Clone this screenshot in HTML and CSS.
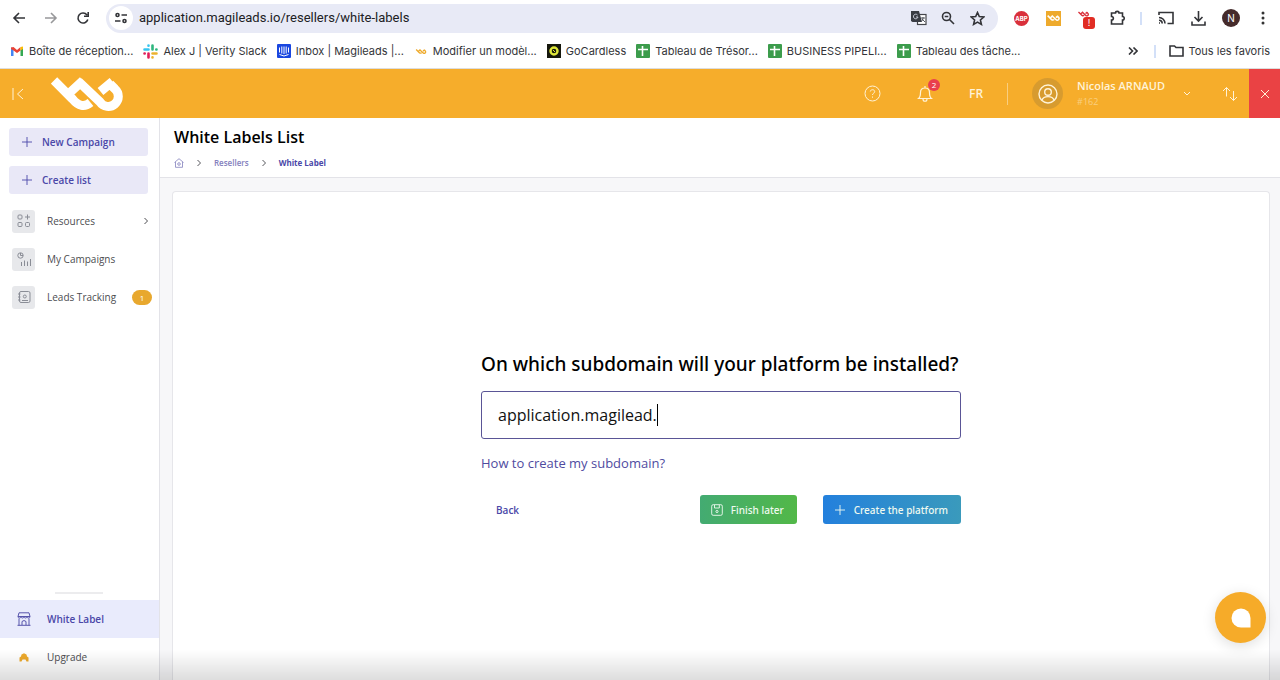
FILE: index.html
```html
<!DOCTYPE html>
<html lang="en">
<head>
<meta charset="utf-8">
<title>White Labels List</title>
<link rel="stylesheet" href="styles.css">
</head>
<body>
<svg class="defs" aria-hidden="true">
  <symbol id="brand" viewBox="0 0 72 34">
    <path d="M3 3.500 21.500 22Q30.500 33 39.500 25.500M32 3.500 19 15.500M27.500 4.500 49 25A10 10 0 1 0 64 12L59 7M61.500 4.500 49.500 14.500" fill="none" stroke="currentColor" stroke-width="9"/>
  </symbol>
  <symbol id="plus" viewBox="0 0 12 12"><path d="M6 1v10M1 6h10" fill="none" stroke="currentColor" stroke-width=".9"/></symbol>
  <symbol id="chevron" viewBox="0 0 8 8"><path d="m2.500 1 3 3-3 3" fill="none" stroke="currentColor"/></symbol>
  <symbol id="sheet" viewBox="0 0 14 14"><rect width="14" height="14" rx="1" fill="#3c9c4c"/><path d="M2 5.500h10M6.500 2v10" stroke="#fff" stroke-width="1.600"/></symbol>
</svg>

<div class="browser">
  <div class="toolbar">
    <button class="tool" aria-label="Back"><svg width="14" height="14" viewBox="0 0 14 14"><path d="M13 7H2M7 2 2 7l5 5" class="ln bold"/></svg></button>
    <button class="tool dim" aria-label="Forward"><svg width="14" height="14" viewBox="0 0 14 14"><path d="M1 7h11M7 2l5 5-5 5" class="ln bold"/></svg></button>
    <button class="tool" aria-label="Reload"><svg width="14" height="14" viewBox="0 0 14 14"><path d="M11.800 8.500A5 5 0 1 1 11 4M12.200 1v4.300H8" class="ln bold"/></svg></button>
    <div class="address">
      <button class="site" aria-label="Site information"><svg width="12" height="12" viewBox="0 0 12 12"><g class="ln bold"><circle cx="2.500" cy="3" r="1.500"/><path d="M6.500 3H12M0 9h5.500"/><circle cx="9.500" cy="9" r="1.500"/></g></svg></button>
      <input class="url" aria-label="Address" value="application.magileads.io/resellers/white-labels">
      <button class="tool" aria-label="Translate"><svg width="16" height="16" viewBox="0 0 16 16"><rect x="6.500" y="4.500" width="8.500" height="10" fill="#fff" class="ln"/><path d="M0 1h8l3 11H1.500L0 11z" fill="#3a3d44"/><path d="M6.500 5A2.300 2.300 0 1 0 7 7H5" fill="none" stroke="#c8ccd8"/><path d="M10 8h4M12 7v1c0 2-1 3-2 4M11 9l3 3" fill="none" stroke="#55585f"/></svg></button>
      <button class="tool" aria-label="Zoom"><svg width="14" height="14" viewBox="0 0 14 14"><g class="ln bold"><circle cx="5.500" cy="5.500" r="4"/><path d="m8.500 8.500 4.500 4.500M3.700 5.500h3.600"/></g></svg></button>
      <button class="tool" aria-label="Bookmark"><svg width="15" height="15" viewBox="0 0 15 15"><path d="m7.500 1.500 1.800 4.100 4.500.4-3.400 3 1 4.400-3.900-2.300-3.900 2.300 1-4.400-3.400-3 4.500-.4z" class="ln bold"/></svg></button>
    </div>
    <button class="ext abp" aria-label="Adblock Plus">ABP</button>
    <button class="ext magi" aria-label="Magileads"><svg width="13" height="6"><use href="#brand"/></svg></button>
    <button class="ext alert" aria-label="Extension alert"><svg width="11" height="6"><use href="#brand"/></svg><span>!</span></button>
    <button class="tool puzzle" aria-label="Extensions"><svg width="16" height="16" viewBox="0 0 16 16"><path d="M1.500 3h4c0-2.200 3.500-2.200 3.500 0h3.500v3.500c2.300 0 2.300 3.500 0 3.500v4h-11v-4c2.500 0 2.500-3.500 0-3.500z" class="ln bold"/></svg></button>
    <i class="rule"></i>
    <button class="tool" aria-label="Cast"><svg width="16" height="14" viewBox="0 0 16 14"><path d="M1 4V1.500h14v11H9.500M1 6.500a6 6 0 0 1 6 6M1 9.300a3.200 3.200 0 0 1 3.200 3.200M1 12h1" class="ln bold"/></svg></button>
    <button class="tool" aria-label="Downloads"><svg width="15" height="15" viewBox="0 0 15 15"><path d="M7.500 0v9.500M3.500 6l4 4 4-4M1 10.500V14h13v-3.500" class="ln bold"/></svg></button>
    <button class="profile" aria-label="Profile">N</button>
    <button class="tool more" aria-label="Menu"><svg width="4" height="14" viewBox="0 0 4 14" fill="#333"><circle cx="2" cy="2" r="1.500"/><circle cx="2" cy="7" r="1.500"/><circle cx="2" cy="12" r="1.500"/></svg></button>
  </div>
  <nav class="bookmarks" aria-label="Bookmarks">
    <a href="#"><svg width="14" height="14" viewBox="0 0 14 14"><path d="M1 3v9h2.500V6z" fill="#4285f4"/><path d="M13 3v9h-2.500V6z" fill="#34a853"/><path d="M1 3.500 3.500 3 7 6l3.500-3v3.500L7 9 3.500 6.500 1 5z" fill="#ea4335"/><path d="M10.500 3 13 2.500V5l-2.500 1.500z" fill="#fbbc04"/></svg>Boîte de réception...</a>
    <a href="#"><svg width="15" height="15" viewBox="0 0 15 15" fill="none" stroke-width="2.600" stroke-linecap="round"><path d="M5.500 1.500v.2M1.500 5.500h4" stroke="#36c5f0"/><path d="M9.500 1.500v4M13.500 5.500h-.2" stroke="#2eb67d"/><path d="M9.500 9.500h4M9.500 13.500v-.2" stroke="#ecb22e"/><path d="M5.500 9.500v4M1.500 9.500h.2" stroke="#e01e5a"/></svg>Alex J | Verity Slack</a>
    <a href="#"><svg width="14" height="14" viewBox="0 0 14 14"><rect width="14" height="14" rx="1" fill="#1a47e0"/><path d="M2.500 3.500v5M4.800 2.500v7M7 2.500v7.500M9.200 2.500v7M11.500 3.500v5M2.500 10.500q4.500 3 9 0" stroke="#fff" fill="none"/></svg>Inbox | Magileads |...</a>
    <a href="#"><svg class="gold" width="14" height="5"><use href="#brand"/></svg>Modifier un modèl...</a>
    <a href="#"><svg width="14" height="14" viewBox="0 0 14 14"><path d="M0 0h14v14H0z" fill="#15170c"/><circle cx="7" cy="7" r="3.500" fill="none" stroke="#dfe83a" stroke-width="2.400"/><path d="m6 6 2 2" stroke="#dfe83a"/></svg>GoCardless</a>
    <a href="#"><svg width="14" height="14"><use href="#sheet"/></svg>Tableau de Trésor...</a>
    <a href="#"><svg width="14" height="14"><use href="#sheet"/></svg>BUSINESS PIPELI...</a>
    <a href="#"><svg width="14" height="14"><use href="#sheet"/></svg>Tableau des tâche...</a>
    <button class="tool overflow" aria-label="More bookmarks"><svg width="10" height="8" viewBox="0 0 10 8"><path d="m1 .5 3.500 3.500L1 7.500M5.500.5 9 4 5.500 7.500" class="ln bold"/></svg></button>
    <i class="rule"></i>
    <a href="#"><svg width="15" height="12" viewBox="0 0 15 12"><path d="M1 1h4.500L7 2.500h7V11H1z" class="ln bold"/></svg>Tous les favoris</a>
  </nav>
</div>

<header class="topbar">
  <button class="collapse" aria-label="Collapse menu"><svg width="12" height="14" viewBox="0 0 12 14"><path d="M1 1v12M11 2 5.500 7l5.500 5" fill="none" stroke="currentColor"/></svg></button>
  <a class="logo" href="#" aria-label="Magileads"><svg width="72" height="34"><use href="#brand"/></svg></a>
  <button class="help" aria-label="Help"><svg width="17" height="17" viewBox="0 0 17 17" fill="none" stroke="currentColor"><circle cx="8.500" cy="8.500" r="7.500"/><path d="M6.300 6.500c.3-2.500 4.400-2.300 4.400.1 0 1.700-2.200 1.500-2.200 3.400M8.500 11.500v1.200"/></svg></button>
  <button class="bell" aria-label="Notifications"><svg width="16" height="18" viewBox="0 0 16 18" fill="none" stroke="currentColor" stroke-width="1.200"><path d="M1.500 13.500Q3.500 12 3.500 7.500 3.500 3 8 3t4.500 4.500q0 4.500 2 6zM8 1v2M6 14c0 3 4 3 4 0"/></svg><span>2</span></button>
  <button class="lang">FR</button>
  <i class="split"></i>
  <button class="account">
    <span class="avatar"><svg width="20" height="20" viewBox="0 0 20 20" fill="none" stroke="currentColor" stroke-width="1.400"><circle cx="10" cy="10" r="9"/><circle cx="10" cy="8" r="3.300"/><path d="M4 16c1.500-4.500 10.500-4.500 12 0"/></svg></span>
    <span class="who"><b>Nicolas ARNAUD</b><small>#162</small></span>
    <svg width="8" height="6" viewBox="0 0 8 6"><path d="m1 1 3 3 3-3" fill="none" stroke="currentColor"/></svg>
  </button>
  <button class="swap" aria-label="Switch account"><svg width="16" height="16" viewBox="0 0 16 16"><path d="M4.500 10.500V1.500M1 5l3.500-3.500L8 5M11.500 5v9.500M8 11l3.500 3.500L15 11" fill="none" stroke="currentColor"/></svg></button>
  <button class="exit" aria-label="Close"><svg width="10" height="10" viewBox="0 0 10 10"><path d="m1 1 8 8M9 1 1 9" stroke="currentColor"/></svg></button>
</header>

<div class="app">
  <aside class="sidebar">
    <button class="action"><svg width="12" height="12"><use href="#plus"/></svg>New Campaign</button>
    <button class="action"><svg width="12" height="12"><use href="#plus"/></svg>Create list</button>
    <nav class="menu">
      <a href="#"><span class="tile"><svg width="14" height="14" viewBox="0 0 14 14" fill="none" stroke="currentColor"><rect x="1" y="1" width="4" height="4" rx="1"/><path d="M10.500 .5v5M8 3h5"/><rect x="1" y="8.500" width="4" height="4" rx="1"/><rect x="8.500" y="8.500" width="4" height="4" rx="1"/></svg></span><span class="name">Resources</span><svg class="go" width="8" height="8"><use href="#chevron"/></svg></a>
      <a href="#"><span class="tile"><svg width="14" height="14" viewBox="0 0 14 14" fill="none" stroke="currentColor"><circle cx="3.500" cy="3.500" r="2.700"/><path d="M3.500 1v2.500H6M4.500 10v4M7.500 8.500V14M10.500 9.500V14M13.500 7v7"/></svg></span><span class="name">My Campaigns</span></a>
      <a href="#"><span class="tile"><svg width="14" height="14" viewBox="0 0 14 14" fill="none" stroke="currentColor"><rect x="2.500" y="1.500" width="10.500" height="11" rx="1.500"/><circle cx="7.800" cy="6.500" r="1.500"/><path d="M1 4h2.500M1 7h2.500M1 10h2.500M5 10.500h6"/></svg></span><span class="name">Leads Tracking</span><span class="count">1</span></a>
    </nav>
    <hr>
    <nav class="menu foot">
      <a class="current" href="#"><span class="tile bare"><svg width="14" height="14" viewBox="0 0 14 14" fill="none" stroke="currentColor"><path d="M2 .8h10l1 3.700H1zM1 4.500c0 2 3 2 3 0 0 2 3 2 3 0 0 2 3 2 3 0 0 2 3 2 3 0M2 6.500v6.800M12 6.500v6.800M.5 13.300h13M5 13V9.500q2-2 4 0V13"/></svg></span><span class="name">White Label</span></a>
      <a href="#"><span class="tile bare gold"><svg width="10" height="9" viewBox="0 0 10 9"><path d="M.5 8.500V4.500L2 3.500 2.500 1.500 5 .3l2.500 1.200L8 3.500l1.500 1v4H7.500L6.500 6.500h-3l-1 2z" fill="currentColor"/></svg></span><span class="name">Upgrade</span></a>
    </nav>
  </aside>

  <main class="page">
    <div class="heading">
      <h1>White Labels List</h1>
      <nav class="crumbs" aria-label="Breadcrumb">
        <a href="#" aria-label="Home"><svg width="10" height="10" viewBox="0 0 10 10" fill="none" stroke="currentColor" stroke-width=".8"><path d="M.5 4.500 5 .7l4.500 3.800M1.500 4v5.300h7V4"/><circle cx="5" cy="6" r="1.300"/></svg></a>
        <svg width="8" height="8"><use href="#chevron"/></svg>
        <a href="#">Resellers</a>
        <svg width="8" height="8"><use href="#chevron"/></svg>
        <a class="here" href="#">White Label</a>
      </nav>
    </div>
    <section class="card">
      <form class="setup">
        <label for="subdomain">On which subdomain will your platform be installed?</label>
        <div class="field"><input id="subdomain" value="application.magilead."><i class="caret"></i></div>
        <a class="hint" href="#">How to create my subdomain?</a>
        <div class="buttons">
          <button type="button" class="back">Back</button>
          <button type="button" class="btn later"><svg width="12" height="12" viewBox="0 0 12 12" fill="none" stroke="currentColor" stroke-width=".9"><rect x=".7" y=".7" width="10.600" height="10.600" rx="1.500"/><path d="M3.500 1v3h4.800V1"/><circle cx="6" cy="7.500" r="1.100"/></svg>Finish later</button>
          <button type="button" class="btn create"><svg width="12" height="12"><use href="#plus"/></svg>Create the platform</button>
        </div>
      </form>
    </section>
  </main>
</div>
<button class="chat" aria-label="Open chat"><svg width="20" height="20" viewBox="0 0 20 20"><path d="M10 .5a9.500 9.500 0 0 1 9.500 9.500v9.500H10A9.500 9.500 0 0 1 10 .5z" fill="#fff"/></svg></button>
<div class="shade"></div>
</body>
</html>
```
FILE: styles.css
```css
* { box-sizing: border-box; }
body {
  margin: 0;
  height: 100vh;
  display: flex;
  flex-direction: column;
  overflow: hidden;
  background: #fff;
  font: 10px/16px "Open Sans", "Noto Sans", sans-serif;
  color: #4c4c50;
}
button, input { font: inherit; color: inherit; border: 0; padding: 0; background: none; }
a { color: inherit; text-decoration: none; }
svg { display: block; flex: none; }
.defs { position: absolute; width: 0; height: 0; }
.gold { color: #eeaa2c; }

/* browser frame */
.browser { font-family: Inter, Roboto, sans-serif; font-size: 11px; color: #333438; border-bottom: 1px solid #ddd; }
.ln { fill: none; stroke: #45464b; stroke-width: 1.2; }
rect.ln { fill: #fff; }
.bold { stroke-width: 1.6; stroke: #333438; }
.toolbar { display: flex; align-items: center; height: 36px; padding: 3px 15px 3px 11px; }
.tool { display: flex; justify-content: center; flex: none; width: 14px; }
.toolbar > .tool { width: 16px; margin-right: 16px; }
.dim { opacity: .5; }
.address { flex: 1; display: flex; align-items: center; gap: 15px; height: 29px; margin: 0 16px 0 -1px; padding: 0 14px 0 3px; border-radius: 15px; background: #e8eaf6; }
.site { display: grid; place-items: center; width: 24px; height: 24px; border-radius: 50%; background: #fff; }
.url { flex: 1; min-width: 0; margin-left: -9px; font-family: Roboto, sans-serif; font-size: 13px; color: #202124; outline: 0; }
.ext { display: grid; place-items: center; flex: none; width: 15px; height: 15px; margin-right: 17px; color: #fff; }
.abp { border-radius: 50%; background: #d9303b; font-size: 6px; font-weight: 700; line-height: 15px; }
.magi { background: #eeaa2c; }
.alert { position: relative; color: #d9303b; place-items: start; }
.alert span { position: absolute; left: 5px; top: 6px; width: 12px; height: 12px; border-radius: 3px; background: #e12d24; color: #fff; font-size: 9px; line-height: 12px; text-align: center; }
.rule { flex: none; width: 2px; height: 13px; background: #d3e0f8; }
.toolbar > .puzzle { margin-right: 14px; }
.toolbar .rule { margin-right: 16px; }
.profile { flex: none; width: 18px; height: 18px; margin-right: 21px; border-radius: 50%; background: #452b2b; color: #fff; font-size: 10px; line-height: 18px; }
.toolbar > .more { width: 4px; margin: 0; }
.bookmarks { display: flex; align-items: center; gap: 10px; height: 32px; padding: 0 10px 2px; white-space: nowrap; }
.bookmarks a { display: flex; align-items: center; gap: 5px; }
.overflow { margin-left: auto; }
.bookmarks .rule { margin: 0 3px 0 4px; }

/* application bar */
.topbar { flex: none; display: flex; align-items: center; height: 49px; background: #f6ad2b; color: #fff3d8; }
.collapse { margin-left: 12px; }
.logo { margin: 0 auto 0 27px; color: #fff; }
.bell { position: relative; margin-left: 36px; }
.bell span { position: absolute; left: 11px; top: -6px; width: 12px; height: 12px; border-radius: 50%; background: #e93f4d; color: #fff; font-size: 8px; line-height: 12px; }
.lang { margin-left: 36px; font-size: 12px; font-weight: 600; }
.split { width: 1px; height: 22px; margin: 0 24px; background: #f9ce80; }
.account { display: flex; align-items: center; text-align: left; }
.avatar { display: grid; place-items: center; width: 31px; height: 31px; margin-right: 14px; border-radius: 50%; background: #d79b2f; }
.who { display: grid; margin-right: 18px; }
.who b { font-size: 11px; font-weight: 600; }
.who small { font-size: 9px; color: #f9cf80; }
.swap { margin: 0 11px 0 31px; }
.exit { display: grid; place-items: center; align-self: stretch; width: 31px; background: #ea4244; }

/* side menu */
.app { flex: 1; display: flex; min-height: 0; }
.sidebar { flex: none; width: 160px; display: flex; flex-direction: column; padding-top: 10px; border-right: 1px solid #e3e3e8; }
.action { display: flex; align-items: center; gap: 9px; height: 28px; margin: 0 11px 10px 9px; padding-left: 12px; border-radius: 3px; background: #e9e8f7; color: #4a47a8; font-weight: 600; }
.action + .action { margin-bottom: 8px; }
.menu a { display: flex; align-items: center; height: 38px; padding: 0 7px 0 12px; }
.tile { display: grid; place-items: center; width: 23px; height: 23px; margin-right: 12px; border-radius: 3px; background: #e7e8eb; color: #8a8d96; }
.tile.bare { background: none; color: #5754ac; }
.tile.gold { color: #eeaa2c; }
.name { flex: 1; }
.go { margin-right: 2px; }
.count { width: 20px; height: 15px; border-radius: 8px; background: #e8a82e; color: #fff; font-size: 8px; line-height: 15px; text-align: center; }
.sidebar hr { width: 48px; height: 2px; margin: auto 0 6px 55px; border: 0; background: #ececee; }
.menu .current { background: #e9ebfc; color: #4a47a8; font-weight: 600; }
.foot { padding-bottom: 4px; }

/* page */
.page { flex: 1; display: flex; flex-direction: column; background: #f7f7f9; }
.heading { padding: 8px 14px 6px; background: #fff; border-bottom: 1px solid #e3e3e8; }
h1 { margin: 0 0 7px; font-size: 16px; line-height: 22px; font-weight: 600; color: #000; }
.crumbs { display: flex; align-items: center; gap: 11px; font-size: 8px; font-weight: 600; color: #55565c; }
.crumbs a { color: #8380bd; }
.crumbs .here { color: #4a47a8; font-weight: 700; }
.card { flex: 1; display: grid; place-content: center; margin: 13px 10px 0 12px; padding-top: 2px; border: 1px solid #e6e6ea; border-bottom: 0; border-radius: 4px 4px 0 0; background: #fff; }
.setup { display: flex; flex-direction: column; width: 480px; }
.setup label { font-family: "Noto Sans", sans-serif; font-size: 19px; line-height: 28px; font-weight: 500; color: #000; white-space: nowrap; }
.field { display: flex; align-items: center; height: 48px; margin: 13px 0 16px; padding: 0 16px; border: 1px solid #5a5596; border-radius: 3px; font-size: 16px; color: #111; }
.field input { field-sizing: content; outline: 0; caret-color: transparent; }
.caret { width: 1px; height: 22px; background: #000; }
.hint { align-self: flex-start; font-size: 13px; color: #4f4b9f; }
.buttons { display: flex; align-items: center; margin-top: 24px; font-weight: 600; }
.back { margin: 0 auto 0 15px; color: #4a47a8; }
.btn { display: flex; align-items: center; height: 29px; padding: 0 13px 0 11px; gap: 8px; border-radius: 3px; color: #effaf0; font-family: "Noto Sans", sans-serif; font-weight: 500; }
.later { background: linear-gradient(90deg, #43ab72, #52b848); }
.create { margin-left: 26px; background: linear-gradient(90deg, #2380dd, #3a9abc); }
.chat { position: fixed; right: 14px; bottom: 37px; display: grid; place-items: center; width: 51px; height: 51px; border-radius: 50%; background: #f6ab29; box-shadow: 0 3px 14px #0002; }
.shade { position: fixed; inset: auto 0 0; height: 30px; background: linear-gradient(#0000, #0002); pointer-events: none; }
```
